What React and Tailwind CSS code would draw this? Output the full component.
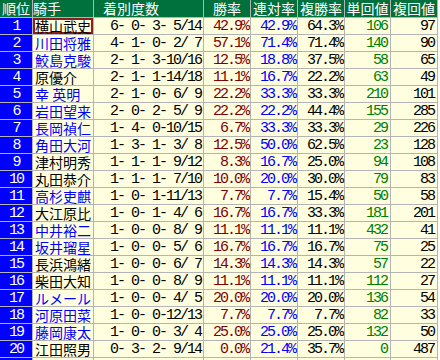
const rows = [
  [1, '横山武史', false, '6- 0- 3- 5/14', '42.9%', '42.9%', '64.3%', 106, 97],
  [2, '川田将雅', true, '4- 1- 0- 2/ 7', '57.1%', '71.4%', '71.4%', 140, 90],
  [3, '鮫島克駿', true, '2- 1- 3-10/16', '12.5%', '18.8%', '37.5%', 58, 65],
  [4, '原優介', false, '2- 1- 1-14/18', '11.1%', '16.7%', '22.2%', 63, 49],
  [5, '幸 英明', true, '2- 1- 0- 6/ 9', '22.2%', '33.3%', '33.3%', 210, 101],
  [6, '岩田望来', true, '2- 0- 2- 5/ 9', '22.2%', '22.2%', '44.4%', 155, 285],
  [7, '長岡禎仁', true, '1- 4- 0-10/15', '6.7%', '33.3%', '33.3%', 29, 226],
  [8, '角田大河', true, '1- 3- 1- 3/ 8', '12.5%', '50.0%', '62.5%', 23, 128],
  [9, '津村明秀', false, '1- 1- 1- 9/12', '8.3%', '16.7%', '25.0%', 94, 108],
  [10, '丸田恭介', false, '1- 1- 1- 7/10', '10.0%', '20.0%', '30.0%', 79, 83],
  [11, '高杉吏麒', true, '1- 0- 1-11/13', '7.7%', '7.7%', '15.4%', 50, 58],
  [12, '大江原比', false, '1- 0- 1- 4/ 6', '16.7%', '16.7%', '33.3%', 181, 201],
  [13, '中井裕二', true, '1- 0- 0- 8/ 9', '11.1%', '11.1%', '11.1%', 432, 41],
  [14, '坂井瑠星', true, '1- 0- 0- 5/ 6', '16.7%', '16.7%', '16.7%', 75, 25],
  [15, '長浜鴻緒', false, '1- 0- 0- 6/ 7', '14.3%', '14.3%', '14.3%', 57, 22],
  [16, '柴田大知', false, '1- 0- 0- 8/ 9', '11.1%', '11.1%', '11.1%', 112, 27],
  [17, 'ルメール', true, '1- 0- 0- 4/ 5', '20.0%', '20.0%', '20.0%', 136, 54],
  [18, '河原田菜', true, '1- 0- 0-12/13', '7.7%', '7.7%', '7.7%', 82, 33],
  [19, '藤岡康太', true, '1- 0- 0- 3/ 4', '25.0%', '25.0%', '25.0%', 132, 50],
  [20, '江田照男', false, '0- 3- 2- 9/14', '0.0%', '21.4%', '35.7%', 0, 487],
]

const jp = "font-['MS_Gothic','Noto_Sans_CJK_JP',sans-serif]"
const mono = "font-['Liberation_Mono','Noto_Sans_CJK_JP',monospace] tracking-[-2px] whitespace-pre"

function Head({ children, className = '' }) {
  return (
    <div className={`h-[17px] bg-[#00703c] text-[14px] leading-[16px] text-white ${jp} ${className}`}>
      {children}
    </div>
  )
}

function Num({ children, className = '' }) {
  return (
    <div className={`h-4 bg-[#ffffe0] pr-[2px] text-right text-[15px] leading-[17px] ${mono} ${className}`}>
      {children}
    </div>
  )
}

export default function App() {
  return (
    <div className="h-[360px] w-[440px] overflow-hidden bg-white">
      <div className="grid w-[438px] grid-cols-[32px_60px_109px_46px_46px_46px_45px_46px] gap-px bg-[#b4b4b4]">
        <Head className="text-center">順位</Head>
        <Head>騎手</Head>
        <Head className="bg-[#33ff33] pl-[9px] text-black">着別度数</Head>
        <Head className="text-center">勝率</Head>
        <Head className="text-center">連対率</Head>
        <Head className="text-center">複勝率</Head>
        <Head className="text-center">単回値</Head>
        <Head className="text-center">複回値</Head>

        {rows.map(([rank, name, blue, record, win, ren, fuku, tan, fukuVal]) => (
          <div key={rank} className="contents">
            <div className={`h-4 bg-[#0000ff] text-center text-[15px] leading-[17px] text-white ${mono}`}>
              {rank}
            </div>
            <div
              className={`h-4 bg-[#ffffe0] pl-[2px] text-[14px] leading-[16px] ${jp} ${
                blue ? 'text-[#0000ff]' : 'text-black'
              } ${rank === 1 ? 'ring-2 ring-inset ring-[#8b2020]' : ''}`}
            >
              {name}
            </div>
            <Num className="pl-[8px] text-left text-black">{record}</Num>
            <Num className="text-[#800000]">{win}</Num>
            <Num className="text-[#0000ff]">{ren}</Num>
            <Num className="text-black">{fuku}</Num>
            <Num className="pr-[3px] text-[#008000]">{tan}</Num>
            <Num className="pr-[3px] text-black">{fukuVal}</Num>
          </div>
        ))}

        <div className="h-4 bg-[#0000ff]" />
        <div className="h-4 bg-[#ffffe0]" />
        <div className="h-4 bg-[#ffffe0]" />
        <div className="h-4 bg-[#ffffe0]" />
        <div className="h-4 bg-[#ffffe0]" />
        <div className="h-4 bg-[#ffffe0]" />
        <div className="h-4 bg-[#ffffe0]" />
        <div className="h-4 bg-[#ffffe0]" />
      </div>
    </div>
  )
}
